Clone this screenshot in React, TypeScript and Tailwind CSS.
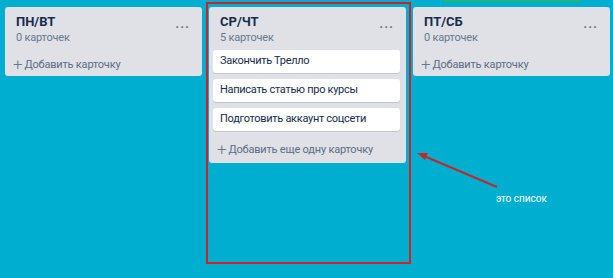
import React from "react";

const font = { fontFamily: 'Roboto, "Noto Sans", sans-serif' };

function Dots() {
  return (
    <span className="text-[#6b778c] text-[13px] leading-none tracking-[1px] font-bold">···</span>
  );
}

function Header({ title, count }: { title: string; count: string }) {
  return (
    <div className="flex justify-between pl-[11px] pr-[12px] pt-[6px]">
      <div>
        <div className="text-[13px] font-bold text-[#172b4d] leading-[17px] whitespace-nowrap">{title}</div>
        <div className="text-[11px] text-[#6b778c] leading-[15px] tracking-[-0.2px] whitespace-nowrap">{count}</div>
      </div>
      <div className="mt-[1px]"><Dots /></div>
    </div>
  );
}

function AddRow({ text }: { text: string }) {
  return (
    <div className="flex items-center text-[11px] tracking-[-0.2px] text-[#5e6c84] pl-[8px] leading-[16px] whitespace-nowrap">
      <span className="text-[17px] leading-none mr-[2px] font-light text-[#6b778c]">+</span>
      {text}
    </div>
  );
}

function Card({ text }: { text: string }) {
  return (
    <div className="bg-white rounded-[3px] h-[23px] flex items-center pl-[7px] text-[11px] tracking-[-0.3px] text-[#172b4d] shadow-[0_1px_0_#c1c7d0] whitespace-nowrap">
      {text}
    </div>
  );
}

export default function App() {
  return (
    <div className="relative w-[613px] h-[278px] bg-[#00afcf] overflow-hidden" style={font}>
      <div className="absolute left-[443px] top-0 w-[137px] h-[2px] bg-[#22b57a]" />
      <div className="flex items-start gap-[7px] pl-[5px] pt-[7px]">
        <div className="w-[197px] h-[69px] bg-[#dfe1e6] rounded-[3px] flex flex-col">
          <Header title="ПН/ВТ" count="0 карточек" />
          <div className="mt-[11px]"><AddRow text="Добавить карточку" /></div>
        </div>
        <div className="w-[197px] h-[156px] bg-[#dfe1e6] rounded-[3px] flex flex-col">
          <Header title="СР/ЧТ" count="5 карточек" />
          <div className="flex flex-col gap-[6px] pl-[4px] pr-[6px] mt-[5px]">
            <Card text="Закончить Трелло" />
            <Card text="Написать статью про курсы" />
            <Card text="Подготовить аккаунт соцсети" />
          </div>
          <div className="mt-[10px]"><AddRow text="Добавить еще одну карточку" /></div>
        </div>
        <div className="w-[197px] h-[69px] bg-[#dfe1e6] rounded-[3px] flex flex-col">
          <Header title="ПТ/СБ" count="0 карточек" />
          <div className="mt-[11px]"><AddRow text="Добавить карточку" /></div>
        </div>
      </div>

      <div className="absolute left-[206px] top-[2px] w-[205px] h-[262px] border-2 border-[#d0202a]" />

      <svg className="absolute left-0 top-0" width="613" height="278">
        <line x1="497" y1="187" x2="424" y2="156" stroke="#c0282e" strokeWidth="2" />
        <polygon points="417,153 428,153 425,160" fill="#c0282e" />
      </svg>
      <div className="absolute left-[496px] top-[194px] text-[10px] text-white leading-none">это список</div>
    </div>
  );
}
